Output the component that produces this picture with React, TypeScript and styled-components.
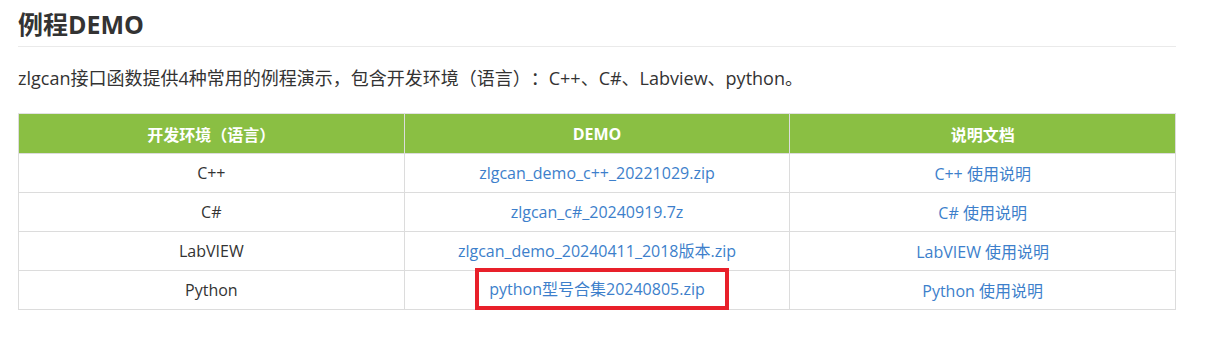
import React from 'react';
import styled, { createGlobalStyle } from 'styled-components';

const GlobalStyle = createGlobalStyle`
  html, body {
    margin: 0;
    padding: 0;
    background: #fff;
  }
  body {
    font-family: "Open Sans", "Noto Sans CJK SC", sans-serif;
    color: #333;
    text-spacing-trim: space-all;
  }
`;

const Section = styled.section`
  width: 1158px;
  padding: 0 30px 0 18px;
`;

const Title = styled.h2`
  margin: 0;
  padding: 6px 0 4px;
  font-size: 25px;
  line-height: 36px;
  font-weight: 700;
  color: #333;
  border-bottom: 1px solid #eaeaea;
`;

const Intro = styled.p`
  margin: 18px 0 21px;
  font-size: 18px;
  line-height: 27px;
  color: #333;
`;

const Table = styled.table`
  width: 100%;
  table-layout: fixed;
  border-collapse: collapse;
  font-size: 16px;
  border: 1px solid #dcdcdc;
`;

const HeadCell = styled.th`
  height: 39px;
  padding: 0 8px;
  background: #8abf43;
  color: #fff;
  font-weight: 700;
  text-align: center;
  border: 1px solid #dcdcdc;
  border-top-color: #e2e2e2;
`;

const Cell = styled.td`
  height: 38px;
  padding: 0 8px;
  text-align: center;
  color: #333;
  border: 1px solid #dcdcdc;
`;

const FileLink = styled.a`
  color: #3d7fcb;
  text-decoration: none;
`;

// red annotation frame round one of the downloads
const Marked = styled.span<{ $on?: boolean }>`
  display: inline-block;
  line-height: 24px;
  ${p => p.$on && `
    padding: 5px 20px 5px 10px;
    margin: -8px 0 -6px 10px;
    border: 4px solid #e8202a;
  `}
`;

interface DemoRow {
  env: string;
  file: string;
  doc: string;
  marked?: boolean;
}

const rows: DemoRow[] = [
  { env: 'C++', file: 'zlgcan_demo_c++_20221029.zip', doc: 'C++ 使用说明' },
  { env: 'C#', file: 'zlgcan_c#_20240919.7z', doc: 'C# 使用说明' },
  { env: 'LabVIEW', file: 'zlgcan_demo_20240411_2018版本.zip', doc: 'LabVIEW 使用说明' },
  { env: 'Python', file: 'python型号合集20240805.zip', doc: 'Python 使用说明', marked: true },
];

export default function App() {
  return (
    <>
      <GlobalStyle />
      <Section>
        <Title>例程DEMO</Title>
        <Intro>
          zlgcan接口函数提供4种常用的例程演示，包含开发环境（语言）：C++、C#、Labview、python。
        </Intro>
        <Table>
          <thead>
            <tr>
              <HeadCell>开发环境（语言）</HeadCell>
              <HeadCell>DEMO</HeadCell>
              <HeadCell>说明文档</HeadCell>
            </tr>
          </thead>
          <tbody>
            {rows.map(row => (
              <tr key={row.env}>
                <Cell>{row.env}</Cell>
                <Cell>
                  <Marked $on={row.marked}>
                    <FileLink href="#">{row.file}</FileLink>
                  </Marked>
                </Cell>
                <Cell>
                  <FileLink href="#">{row.doc}</FileLink>
                </Cell>
              </tr>
            ))}
          </tbody>
        </Table>
      </Section>
    </>
  );
}
